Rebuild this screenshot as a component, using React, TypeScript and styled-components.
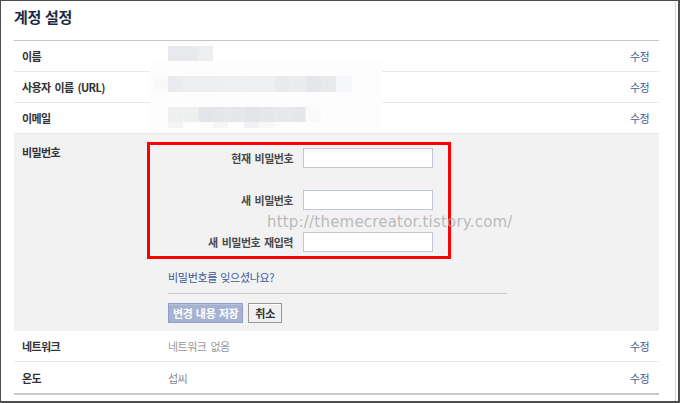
import React from 'react';
import styled, { createGlobalStyle } from 'styled-components';

const GlobalStyle = createGlobalStyle`
  html, body { margin: 0; padding: 0; background: #fff; }
  body {
    font-family: "Noto Sans CJK KR", "Noto Sans", sans-serif;
    font-size: 11px;
    color: #333;
  }
  * { box-sizing: border-box; }
`;

const Frame = styled.div`
  width: 680px;
  height: 403px;
  border-style: solid;
  border-color: #4d4d4d;
  border-width: 1px 2px 2px 1px;
  display: flex;
  background: #fff;
  overflow: hidden;
`;

const Page = styled.div`
  flex: 1;
  padding: 0 16px 0 13px;
  position: relative;
`;

const ScrollEdge = styled.div`
  width: 3px;
  border-left: 1px solid #d6d6d6;
`;

const Header = styled.div`
  height: 40px;
  padding-top: 5px;
  border-bottom: 1px solid #c6c6c6;
`;

const Title = styled.h1`
  margin: 0;
  font-size: 15px;
  font-weight: 600;
  letter-spacing: -0.3px;
  word-spacing: 1px;
  line-height: 22px;
  color: #1c2a47;
`;

const Rows = styled.div`
  position: relative;
`;

const Row = styled.div<{ $strong?: boolean }>`
  display: flex;
  align-items: center;
  height: ${(p) => (p.$strong ? 33 : 31)}px;
  border-bottom: ${(p) => (p.$strong ? '2px solid #c8c8c8' : '1px solid #e9e9e9')};
`;

const Label = styled.div`
  width: 154px;
  padding-left: 8px;
  font-weight: 600;
  letter-spacing: -0.6px;
  word-spacing: 2px;
  color: #333;
`;

const Value = styled.div<{ $tone?: string }>`
  flex: 1;
  letter-spacing: -0.5px;
  word-spacing: 2px;
  color: ${(p) => p.$tone || '#333'};
`;

const EditLink = styled.a`
  margin-right: 10px;
  color: #3b5998;
  letter-spacing: -0.6px;
  text-decoration: none;
  cursor: pointer;
`;

const Mosaic = styled.svg`
  position: absolute;
  left: 136px;
  top: 0;
`;

const PasswordSection = styled.div`
  display: flex;
  background: #f2f2f2;
  padding: 10px 0 8px;
`;

const SectionLabel = styled.div`
  width: 154px;
  padding-left: 8px;
  font-weight: 600;
  letter-spacing: -0.6px;
  line-height: 16px;
  color: #333;
`;

const SectionBody = styled.div`
  display: flex;
  flex-direction: column;
  padding-top: 4px;
`;

const Form = styled.div`
  display: grid;
  grid-template-columns: 125px 130px;
  grid-auto-rows: 20px;
  column-gap: 10px;
  row-gap: 22px;
  align-items: center;
`;

const FieldLabel = styled.label`
  text-align: right;
  font-weight: 600;
  letter-spacing: -0.5px;
  word-spacing: 2px;
  color: #4a4a4a;
`;

const Input = styled.input`
  width: 130px;
  height: 20px;
  margin: 0;
  border: 1px solid #bdc7d8;
  background: #fff;
  padding: 0 3px;
`;

const ForgotLink = styled.a`
  margin-top: 18px;
  line-height: 14px;
  color: #3b5998;
  letter-spacing: -0.3px;
  word-spacing: 1px;
  text-decoration: none;
`;

const Divider = styled.div`
  width: 339px;
  height: 1px;
  margin-top: 9px;
  background: #cacaca;
`;

const Buttons = styled.div`
  display: flex;
  gap: 5px;
  margin-top: 9px;
`;

const Button = styled.button<{ $primary?: boolean }>`
  height: 20px;
  margin: 0;
  padding: 0 ${(p) => (p.$primary ? 4 : 6)}px;
  font-family: inherit;
  font-size: 11px;
  font-weight: 600;
  letter-spacing: -0.3px;
  word-spacing: 1px;
  line-height: 18px;
  color: ${(p) => (p.$primary ? '#fff' : '#333')};
  background: ${(p) => (p.$primary ? '#a5b2d2' : '#f0f0f0')};
  border: 1px solid ${(p) => (p.$primary ? '#8f9fc8' : '#999')};
  box-shadow: ${(p) => (p.$primary ? 'inset 0 1px 0 #b6c1dc' : 'inset 0 1px 0 #fff')};
`;

const Annotation = styled.div`
  position: absolute;
  left: 146px;
  top: 141px;
  width: 304px;
  height: 117px;
  border: 3px solid #ff0000;
  box-shadow: inset 0 0 0 1px #f8f8f8, 0 1px 0 #e6f8f8;
  pointer-events: none;
`;

const Watermark = styled.div`
  position: absolute;
  left: 266px;
  top: 212px;
  font-family: "DejaVu Sans", Verdana, sans-serif;
  font-size: 15px;
  letter-spacing: 0.2px;
  line-height: 18px;
  color: rgba(170, 170, 170, 0.8);
  white-space: nowrap;
  pointer-events: none;
`;

type Cell = [number, number, number, number, string];

const mosaicCells: Cell[] = [
  [18, 5, 15, 15, '#e8e9ec'],
  [33, 5, 15, 15, '#e8e9ec'],
  [48, 5, 15, 15, '#eceef0'],
  [3, 35, 15, 16, '#f9f9f9'],
  ...(['#e9ebee', '#eceef0', '#eceef0', '#edeff0', '#eef0f1', '#eef0f1', '#eef0f1', '#e9eaec', '#ebecee', '#e5e6e9', '#e8e9eb'].map(
    (c, i) => [18 + i * 15.3, 35, 15.4, 16, c] as Cell
  )),
  [187, 35, 15, 16, '#f5f7fa'],
  ...(['#eeeff0', '#eef0f0', '#e4e5e9', '#e6e7ea', '#e6e7eb', '#e3e4e8', '#e6e7ea', '#e7e8eb', '#e6e7ea', '#fafafa'].map(
    (c, i) => [18 + i * 15.3, 66, 15.4, 15, c] as Cell
  )),
  [18, 81, 15, 6, '#f3f4f5'],
  [63, 81, 15, 6, '#f6f6f7'],
  [94, 81, 15, 6, '#f1f1f3'],
  [109, 81, 15, 6, '#f7f7f8'],
];

const rowsTop = [
  { label: '이름' },
  { label: '사용자 이름 (URL)' },
  { label: '이메일' },
];

export default function App() {
  return (
    <>
      <GlobalStyle />
      <Frame>
        <Page>
          <Header>
            <Title>계정 설정</Title>
          </Header>
          <Rows>
            {rowsTop.map((r) => (
              <Row key={r.label}>
                <Label>{r.label}</Label>
                <Value />
                <EditLink>수정</EditLink>
              </Row>
            ))}
            <Mosaic width={232} height={89} viewBox="0 0 232 89">
              <rect x={0} y={20} width={232} height={69} fill="#fdfdfe" />
              {mosaicCells.map(([x, y, w, h, c], i) => (
                <rect key={i} x={x} y={y} width={w} height={h} fill={c} />
              ))}
            </Mosaic>
          </Rows>
          <PasswordSection>
            <SectionLabel>비밀번호</SectionLabel>
            <SectionBody>
              <Form>
                <FieldLabel>현재 비밀번호</FieldLabel>
                <Input type="password" />
                <FieldLabel>새 비밀번호</FieldLabel>
                <Input type="password" />
                <FieldLabel>새 비밀번호 재입력</FieldLabel>
                <Input type="password" />
              </Form>
              <ForgotLink>비밀번호를 잊으셨나요?</ForgotLink>
              <Divider />
              <Buttons>
                <Button $primary>변경 내용 저장</Button>
                <Button>취소</Button>
              </Buttons>
            </SectionBody>
          </PasswordSection>
          <Row>
            <Label>네트워크</Label>
            <Value $tone="#999">네트워크 없음</Value>
            <EditLink>수정</EditLink>
          </Row>
          <Row $strong>
            <Label>온도</Label>
            <Value $tone="#888">섭씨</Value>
            <EditLink>수정</EditLink>
          </Row>
          <Annotation />
          <Watermark>http://themecreator.tistory.com/</Watermark>
        </Page>
        <ScrollEdge />
      </Frame>
    </>
  );
}
